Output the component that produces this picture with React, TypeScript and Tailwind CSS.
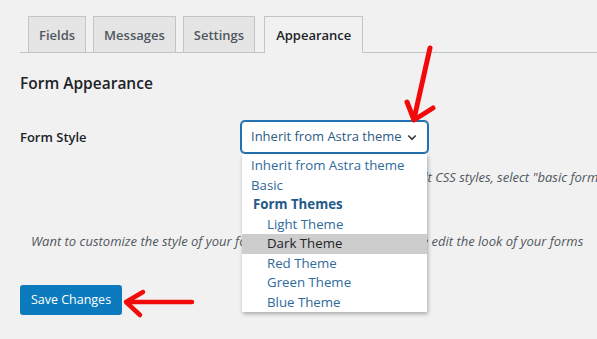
import React from "react";

const tabs = ["Fields", "Messages", "Settings", "Appearance"];

export default function App() {
  return (
    <div
      className="relative w-[597px] h-[339px] overflow-hidden bg-[#f1f1f1]"
      style={{ fontFamily: '"Open Sans", "Noto Sans", sans-serif' }}
    >
      <nav className="ml-[20px] pt-[16px] pl-[8px] flex gap-[7px] border-b border-[#c3c4c7] h-[53px]">
        {tabs.map((t) => {
          const active = t === "Appearance";
          return (
            <div
              key={t}
              className={
                active
                  ? "h-[37px] -mb-px ml-[2px] pt-[1px] px-[11px] border border-b-0 border-[#c3c4c7] bg-[#f1f1f1] flex items-center text-[13px] font-semibold text-[#1d2327]"
                  : "h-[36px] pt-[2px] px-[10px] border border-b-0 border-[#c3c4c7] bg-[#e5e5e5] flex items-center text-[13px] font-semibold text-[#50575e]"
              }
            >
              {t}
            </div>
          );
        })}
      </nav>

      <div className="pl-[20px]">
        <h2 className="mt-[19px] text-[15.5px] leading-[22px] font-semibold text-[#1d2327]">
          Form Appearance
        </h2>

        <div className="mt-[27px] flex items-center">
          <div className="w-[221px] pt-[2px] text-[13px] font-semibold text-[#1d2327]">Form Style</div>
          <div className="relative">
            <div className="w-[187px] h-[32px] rounded-[4px] border border-[#2271b1] shadow-[0_0_0_1px_#2271b1] bg-white flex items-center justify-between pl-[9px] pr-[10px] whitespace-nowrap text-[13px] text-[#2c5a83]">
              <span>Inherit from Astra theme</span>
              <svg width="10" height="7" viewBox="0 0 10 7" fill="none">
                <path d="M1.2 1.5 L5 5.2 L8.8 1.5" stroke="#3c434a" strokeWidth="1.7" />
              </svg>
            </div>
            <ul className="absolute left-[1px] top-[33px] w-[185px] z-10 bg-white pt-[2px] shadow-[1px_2px_4px_rgba(0,0,0,0.3)] whitespace-nowrap text-[13.25px] leading-[19.5px] text-[#2f6a9b]">
              <li className="pl-[9px]">Inherit from Astra theme</li>
              <li className="pl-[9px]">Basic</li>
              <li className="pl-[11px] font-bold text-[#1f5a8a]">Form Themes</li>
              <li className="pl-[25px]">Light Theme</li>
              <li className="pl-[25px] bg-[#cdcdcd] text-[#1d2327]">Dark Theme</li>
              <li className="pl-[25px]">Red Theme</li>
              <li className="pl-[25px]">Green Theme</li>
              <li className="pl-[25px]">Blue Theme</li>
            </ul>
          </div>
        </div>

        <p className="mt-[14px] ml-[222px] whitespace-nowrap italic text-[13px] leading-[20px] text-[#50575e]">
          ' If you'd prefer to use the default CSS styles, select "basic form theme".
        </p>

        <p className="mt-[44px] ml-[11px] whitespace-nowrap italic text-[13px] leading-[20px] text-[#50575e]">
          Want to customize the style of your forms? Try the Form Stylers to live edit the look of your forms
        </p>

        <button className="mt-[34px] w-[102px] h-[30px] rounded-[3px] bg-[#0b7bbd] text-white text-[12.5px]">
          Save Changes
        </button>
      </div>

      <svg
        className="absolute inset-0 pointer-events-none z-20"
        width="597"
        height="339"
        viewBox="0 0 597 339"
        fill="none"
      >
        <g stroke="#f20a0a" strokeWidth="5" strokeLinecap="round" strokeLinejoin="round">
          <path d="M430 48 L414 119" />
          <path d="M407 102 L414 120 L433 108" />
        </g>
        <g stroke="#f20a0a" strokeWidth="4.5" strokeLinecap="round" strokeLinejoin="round">
          <path d="M192 302 L127 302" />
          <path d="M143 292 L126 302 L140 315" />
        </g>
      </svg>
    </div>
  );
}
